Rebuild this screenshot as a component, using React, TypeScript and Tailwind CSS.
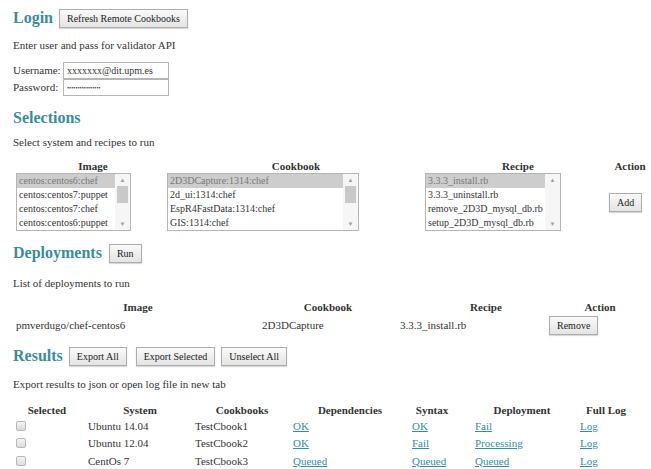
import React from 'react';

// Rows of the results table
const results = [
  { system: 'Ubuntu 14.04', cb: 'TestCbook1', dep: 'OK', syn: 'OK', deploy: 'Fail' },
  { system: 'Ubuntu 12.04', cb: 'TestCbook2', dep: 'OK', syn: 'Fail', deploy: 'Processing' },
  { system: 'CentOs 7', cb: 'TestCbook3', dep: 'Queued', syn: 'Queued', deploy: 'Queued' },
];

const serif = "font-['Liberation_Serif']";

function SectionTitle({ children }: { children: React.ReactNode }) {
  return (
    <h2 className={`${serif} text-[16px] font-bold leading-[20px] text-[#3b8c9c]`}>{children}</h2>
  );
}

function Button({ label, className = '' }: { label: string; className?: string }) {
  return (
    <button
      className={`${serif} h-[19px] border border-[#adadad] bg-gradient-to-b from-[#fafafa] to-[#e4e4e4] px-[7px] text-[10px] leading-[17px] text-[#222] shadow-[0_1px_1px_rgba(0,0,0,0.15)] ${className}`}
    >
      {label}
    </button>
  );
}

function ColHead({ w, label }: { w: string; label: string }) {
  return <div className={`${serif} flex justify-center whitespace-nowrap font-bold ${w}`}>{label}</div>;
}

function Link({ children }: { children: React.ReactNode }) {
  return (
    <a href="#" className={`${serif} text-[#2f8fa3] underline`}>
      {children}
    </a>
  );
}

// Multi-row select with a static scrollbar on the right
function SelectList({ items, width, thumb = true }: { items: string[]; width: string; thumb?: boolean }) {
  return (
    <div className={`flex h-[58px] border border-[#b5b5b5] bg-white ${width}`}>
      <div className="flex-1 overflow-hidden">
        {items.map((item, i) => (
          <div
            key={item}
            className={`${serif} h-[14px] whitespace-nowrap pl-[2px] text-[10px] leading-[14px] ${i === 0 ? 'bg-[#cdcdcd] text-[#777]' : ''}`}
          >
            {item}
          </div>
        ))}
      </div>
      <div className="flex w-[15px] flex-col items-center bg-[#f6f6f6] text-[6px] leading-[10px] text-[#a0a0a0]">
        <span className="mt-[1px]">▲</span>
        <div className={`mt-[1px] h-[17px] w-[11px] ${thumb ? 'bg-[#c9c9c9]' : ''}`} />
        <span className="mt-auto mb-[1px]">▼</span>
      </div>
    </div>
  );
}

export default function App() {
  return (
    <main className={`${serif} h-[469px] w-[651px] overflow-hidden bg-white pl-[13px] text-[11px] text-[#333]`}>
      {/* Login */}
      <div className="mt-[8px] flex h-[20px] items-center gap-[6px]">
        <SectionTitle>Login</SectionTitle>
        <Button label="Refresh Remote Cookbooks" />
      </div>
      <p className={`${serif} mt-[10px] h-[14px] leading-[14px]`}>Enter user and pass for validator API</p>
      <div className="mt-[10px] flex h-[17px] items-center">
        <span className={`${serif} w-[50px]`}>Username:</span>
        <input
          readOnly
          value="xxxxxxx@dit.upm.es"
          className={`${serif} h-[17px] w-[106px] border border-[#b5b5b5] px-[3px] text-[10px] outline-none`}
        />
      </div>
      <div className="flex h-[17px] items-center">
        <span className={`${serif} w-[50px]`}>Password:</span>
        <input
          readOnly
          type="password"
          value="xxxxxxxxxxxxxxxx"
          className="h-[17px] w-[106px] border border-[#b5b5b5] px-[3px] text-[6px] outline-none"
        />
      </div>

      {/* Selections */}
      <div className="mt-[12px] h-[20px]">
        <SectionTitle>Selections</SectionTitle>
      </div>
      <p className={`${serif} mt-[7px] h-[14px] leading-[14px]`}>Select system and recipes to run</p>
      <div className="mt-[10px] flex h-[14px] leading-[14px]">
        <ColHead w="w-[160px]" label="Image" />
        <ColHead w="w-[246px]" label="Cookbook" />
        <ColHead w="w-[198px]" label="Recipe" />
        <ColHead w="w-[26px]" label="Action" />
      </div>
      <div className="flex">
        <div className="ml-[3px] w-[151px]">
          <SelectList
            width="w-[115px]"
            items={['centos:centos6:chef', 'centos:centos7:puppet', 'centos:centos7:chef', 'centos:centos6:puppet']}
          />
        </div>
        <div className="w-[258px]">
          <SelectList
            width="w-[192px]"
            items={['2D3DCapture:1314:chef', '2d_ui:1314:chef', 'EspR4FastData:1314:chef', 'GIS:1314:chef']}
          />
        </div>
        <div className="w-[184px]">
          <SelectList
            width="w-[136px]"
            thumb={false}
            items={['3.3.3_install.rb', '3.3.3_uninstall.rb', 'remove_2D3D_mysql_db.rb', 'setup_2D3D_mysql_db.rb']}
          />
        </div>
        <div className="pt-[20px]">
          <Button label="Add" className="h-[17px] px-[6px] leading-[15px]" />
        </div>
      </div>

      {/* Deployments */}
      <div className="mt-[12px] flex h-[20px] items-center gap-[7px]">
        <SectionTitle>Deployments</SectionTitle>
        <Button label="Run" className="h-[18px] px-[5px] leading-[16px]" />
      </div>
      <p className={`${serif} mt-[13px] h-[14px] leading-[14px]`}>List of deployments to run</p>
      <div className="mt-[10px] flex h-[14px] leading-[14px]">
        <ColHead w="w-[250px]" label="Image" />
        <ColHead w="w-[130px]" label="Cookbook" />
        <ColHead w="w-[186px]" label="Recipe" />
        <ColHead w="w-[42px]" label="Action" />
      </div>
      <div className="mt-[1px] flex h-[20px] items-center">
        <span className={`${serif} w-[249px] pl-[3px]`}>pmverdugo/chef-centos6</span>
        <span className={`${serif} w-[138px]`}>2D3DCapture</span>
        <span className={`${serif} w-[149px]`}>3.3.3_install.rb</span>
        <Button label="Remove" className="h-[18px] px-[6px] leading-[16px]" />
      </div>

      {/* Results */}
      <div className="mt-[11px] flex h-[20px] items-center">
        <SectionTitle>Results</SectionTitle>
        <Button label="Export All" className="ml-[6px]" />
        <Button label="Export Selected" className="ml-[9px]" />
        <Button label="Unselect All" className="ml-[6px]" />
      </div>
      <p className={`${serif} mt-[11px] h-[14px] leading-[14px]`}>Export results to json or open log file in new tab</p>
      <div className="mt-[12px] flex h-[14px] leading-[14px]">
        <ColHead w="w-[68px]" label="Selected" />
        <ColHead w="w-[118px]" label="System" />
        <ColHead w="w-[86px]" label="Cookbooks" />
        <ColHead w="w-[130px]" label="Dependencies" />
        <ColHead w="w-[34px]" label="Syntax" />
        <ColHead w="w-[146px]" label="Deployment" />
        <ColHead w="w-[22px]" label="Full Log" />
      </div>
      {results.map((r) => (
        <div key={r.system} className="flex h-[17.5px] items-center">
          <div className="w-[75px] pl-[3px]">
            <span className="block h-[10px] w-[10px] rounded-[2px] border border-[#b8b8b8] bg-gradient-to-b from-[#f4f4f4] to-[#dcdcdc]" />
          </div>
          <span className={`${serif} w-[107px]`}>{r.system}</span>
          <span className={`${serif} w-[98px]`}>{r.cb}</span>
          <span className="w-[119px]">
            <Link>{r.dep}</Link>
          </span>
          <span className="w-[63px]">
            <Link>{r.syn}</Link>
          </span>
          <span className="w-[105px]">
            <Link>{r.deploy}</Link>
          </span>
          <span>
            <Link>Log</Link>
          </span>
        </div>
      ))}
    </main>
  );
}
